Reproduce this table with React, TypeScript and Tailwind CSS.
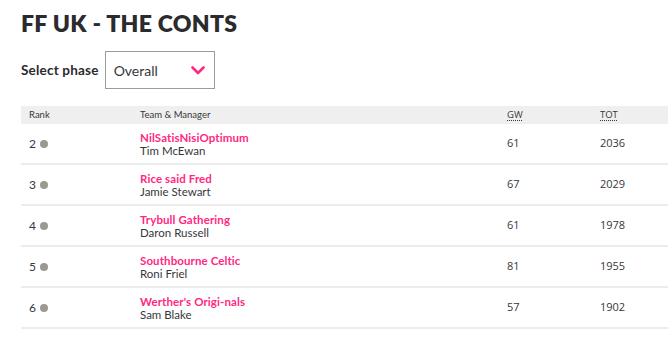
import React from 'react';

type Entry = {
  rank: number;
  team: string;
  manager: string;
  gw: number;
  tot: number;
};

const entries: Entry[] = [
  { rank: 2, team: 'NilSatisNisiOptimum', manager: 'Tim McEwan', gw: 61, tot: 2036 },
  { rank: 3, team: 'Rice said Fred', manager: 'Jamie Stewart', gw: 67, tot: 2029 },
  { rank: 4, team: 'Trybull Gathering', manager: 'Daron Russell', gw: 61, tot: 1978 },
  { rank: 5, team: 'Southbourne Celtic', manager: 'Roni Friel', gw: 81, tot: 1955 },
  { rank: 6, team: "Werther's Origi-nals", manager: 'Sam Blake', gw: 57, tot: 1902 },
];

const cols = 'grid grid-cols-[111px_367px_93px_1fr]';

const App: React.FC = () => {
  return (
    <div className="w-[668px] h-[338px] overflow-hidden bg-white text-[#37373a] font-['Lato','Noto_Sans',sans-serif]">
      {/* Title */}
      <h1 className="pl-[21px] pt-[9px] text-[23px] leading-[28px] font-extrabold text-[#2b2b2e] tracking-[0.3px]">
        FF UK - THE CONTS
      </h1>

      {/* Phase select */}
      <div className="flex items-center pl-[21px] mt-[14px] gap-[6px]">
        <span className="text-[13.5px] font-bold text-[#2b2b2e] tracking-[0.2px]">Select phase</span>
        <div className="w-[110px] h-[38px] border border-[#9c9c98] flex items-center justify-between pl-[8px] pr-[9px]">
          <span className="text-[14px] text-[#37373a]">Overall</span>
          <svg width="14" height="9" viewBox="0 0 14 9" fill="none">
            <path d="M1.5 1.5 L7 7 L12.5 1.5" stroke="#ff2882" strokeWidth="2.6" strokeLinecap="round" strokeLinejoin="round" />
          </svg>
        </div>
      </div>

      {/* Table */}
      <div className="ml-[21px] mt-[17px] w-[700px]">
        <div className={`${cols} bg-[#efefef] h-[18px] items-center text-[9.5px] text-[#37373a] px-[8px]`}>
          <span>Rank</span>
          <span>Team &amp; Manager</span>
          <span className="font-['Open_Sans',sans-serif] underline decoration-dotted underline-offset-2">GW</span>
          <span className="font-['Open_Sans',sans-serif] underline decoration-dotted underline-offset-2">TOT</span>
        </div>
        {entries.map(e => (
          <div key={e.rank} className={`${cols} h-[41px] items-center border-b-2 border-[#ececec] px-[8px]`}>
            <div className="flex items-center gap-[4px] text-[12px] text-[#37373a]">
              <span>{e.rank}</span>
              <span className="w-[8px] h-[8px] rounded-full bg-[#9a9a90]" />
            </div>
            <div className="flex flex-col leading-[13px] pt-[1px]">
              <span className="text-[11.5px] font-bold text-[#ff2882] tracking-[0.1px]">{e.team}</span>
              <span className="text-[11.5px] text-[#37373a]">{e.manager}</span>
            </div>
            <span className="text-[11px] font-['Open_Sans',sans-serif] text-[#37373a]">{e.gw}</span>
            <span className="text-[11px] font-['Open_Sans',sans-serif] text-[#37373a]">{e.tot}</span>
          </div>
        ))}
      </div>
    </div>
  );
};

export default App;
